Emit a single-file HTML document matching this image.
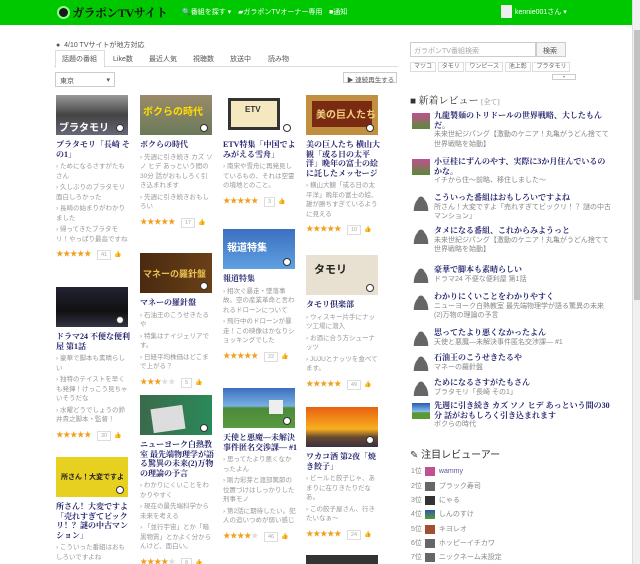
<!DOCTYPE html>
<html style="overflow:hidden;width:640px;height:564px"><head><meta charset="utf-8"><style>
*{margin:0;padding:0;box-sizing:border-box}
body{width:640px;height:564px;overflow:hidden;background:#fff;font-family:"Liberation Sans","Noto Sans CJK JP",sans-serif;position:relative;color:#888}
.hdr{position:absolute;left:0;top:0;width:632px;height:25px;background:#00c800;color:#fff}
.sb{position:absolute;left:632px;top:0;width:8px;height:564px;background:#f0f0f0;border-left:1px solid #ddd}
.sb i{position:absolute;left:1px;top:30px;width:6px;height:270px;background:#c2c2c2}
.a{position:absolute}
.card{position:absolute;width:74px}
.th{width:72px;height:40px;position:relative;overflow:hidden}
.th:after{content:"";position:absolute;right:4px;bottom:3px;width:6px;height:6px;border-radius:50%;background:#fff;border:1.5px solid #333}
.t{font-family:"Liberation Serif","Noto Serif CJK SC",serif;font-weight:bold;color:#23236e;font-size:8px;line-height:9.5px;margin-top:5px}
.c{font-size:6.5px;line-height:9.5px;color:#999;margin-top:3px}
.c p{margin-bottom:2px}
.s{margin-top:4px;font-size:7.5px;color:#f0a020;letter-spacing:-.5px;white-space:nowrap}
.s b{display:inline-block;font-weight:normal;color:#aaa;border:1px solid #ddd;font-size:5.5px;padding:0 3px;margin-left:6px;line-height:8px;letter-spacing:0}
.s u{text-decoration:none;color:#bbb;font-size:6px;margin-left:3px}
.rv{position:absolute;left:412px;width:200px}
.rv .ic{position:absolute;left:0;top:2px;width:18px;height:16px}
.rv .tt{margin-left:22px;font-family:"Liberation Serif","Noto Serif CJK SC",serif;font-weight:bold;color:#23236e;font-size:8px;line-height:9.5px}
.rv .sub{margin-left:22px;font-size:7px;color:#888;line-height:9.5px}
.usr{background:radial-gradient(circle at 50% 30%,#666 3px,transparent 3.5px),radial-gradient(ellipse at 50% 100%,#666 7px,transparent 7.5px)}
.rk{position:absolute;left:411px;font-size:7px;color:#888}
.rk i{display:inline-block;width:10px;height:9px;vertical-align:middle;margin:0 4px 0 3px}
.tab{position:absolute;top:54px;font-size:7px;color:#555;white-space:nowrap}
</style></head><body>
<div class="hdr">
 <div class="a" style="left:57px;top:6px;width:13px;height:13px;border-radius:50%;background:#1a1a1a;border:2px solid #8f8"></div>
 <div class="a" style="left:72px;top:4px;font-size:12px;font-weight:bold;color:#111;letter-spacing:-.5px;font-family:'Liberation Serif','Noto Serif CJK JP',serif">ガラポンTVサイト</div>
 <div class="a" style="left:182px;top:7px;font-size:7px">🔍番組を探す ▾</div>
 <div class="a" style="left:238px;top:7px;font-size:7px">▰ガラポンTVオーナー専用</div>
 <div class="a" style="left:329px;top:7px;font-size:7px">■通知</div>
 <div class="a" style="left:501px;top:5px;width:11px;height:13px;background:#eee"></div>
 <div class="a" style="left:515px;top:7px;font-size:7px">kennie001さん ▾</div>
</div>
<div class="sb"><i></i></div>

<div class="a" style="left:56px;top:40px;font-size:7px;color:#555">● &nbsp;4/10 TVサイトが地方対応</div>
<div class="a" style="left:54px;top:50px;width:344px;height:17px;border-bottom:1px solid #ddd"></div>
<div class="a" style="left:55px;top:50px;width:50px;height:18px;border:1px solid #ddd;border-bottom-color:#fff;background:#fff"></div>
<div class="tab" style="left:62px">話題の番組</div>
<div class="tab" style="left:113px">Like数</div>
<div class="tab" style="left:149px">最近人気</div>
<div class="tab" style="left:193px">視聴数</div>
<div class="tab" style="left:230px">放送中</div>
<div class="tab" style="left:268px">読み物</div>
<div class="a" style="left:55px;top:72px;width:60px;height:15px;border:1px solid #ccc;font-size:7px;color:#555;padding:3px 4px">東京<span style="float:right">▾</span></div>
<div class="a" style="left:343px;top:72px;width:54px;height:11px;border:1px solid #ccc;font-size:6.5px;color:#555;padding:1px 3px;white-space:nowrap">▶ 連続再生する</div>

<!-- col1 -->
<div class="card" style="left:56px;top:95px"><div class="th" style="background:linear-gradient(#999,#444 50%,#667)"><span style="position:absolute;left:3px;top:24px;color:#fff;font-size:10px;font-weight:bold">ブラタモリ</span></div>
<div class="t">ブラタモリ「長崎 その1」</div>
<div class="c"><p>› ためになるさすがたもさん</p><p>› 久しぶりのブラタモリ面白しろかった</p><p>› 長崎の始まりがわかりました</p><p>› 帰ってきたブラタモリ！やっぱり最高ですね</p></div>
<div class="s">★★★★★<b>41</b><u>👍</u></div></div>
<div class="card" style="left:56px;top:287px"><div class="th" style="background:linear-gradient(#223,#111 60%,#334)"></div>
<div class="t">ドラマ24 不便な便利屋 第1話</div>
<div class="c"><p>› 豪華で脚本も素晴らしい</p><p>› 独特のテイストを早くも発揮！けっこう見ちゃいそうだな</p><p>› 水曜どうでしょうの鈴井貴之脚本・監督！</p></div>
<div class="s">★★★★★<b>30</b><u>👍</u></div></div>
<div class="card" style="left:56px;top:457px"><div class="th" style="background:#e8d020"><span style="position:absolute;left:5px;top:15px;color:#222;font-size:7px;font-weight:bold">所さん！大変ですよ</span></div>
<div class="t">所さん！大変ですよ「売れすぎてビックリ！？謎の中古マンション」</div>
<div class="c"><p>› こういった番組はおもしろいですよね</p><p>› 夏はゴルフ冬はスキー</p></div></div>

<!-- col2 -->
<div class="card" style="left:140px;top:95px"><div class="th" style="background:linear-gradient(#9a8a6a,#6a7a5a)"><span style="position:absolute;left:3px;top:8px;color:#fd0;font-size:10px;font-weight:bold">ボクらの時代</span></div>
<div class="t">ボクらの時代</div>
<div class="c"><p>› 先週に引き続き カズ ソノ ヒデ あっという間の30分 話がおもしろく引き込まれます</p><p>› 先週に引き続きおもしろい</p></div>
<div class="s">★★★★★<b>17</b><u>👍</u></div></div>
<div class="card" style="left:140px;top:253px"><div class="th" style="background:linear-gradient(90deg,#4a2a10,#6a4018)"><span style="position:absolute;left:3px;top:14px;color:#e8c050;font-size:9px;font-weight:bold">マネーの羅針盤</span></div>
<div class="t">マネーの羅針盤</div>
<div class="c"><p>› 石油王のこうせきたるや</p><p>› 特集はナイジェリアです。</p><p>› 日経平均株価はどこまで上がる？</p></div>
<div class="s">★★★<span style="color:#ddd">★★</span><b>5</b><u>👍</u></div></div>
<div class="card" style="left:140px;top:395px"><div class="th" style="background:linear-gradient(90deg,#3a6a4a,#2a8a5a)"><div style="position:absolute;left:12px;top:12px;width:32px;height:24px;background:#ddd;transform:rotate(-8deg)"></div></div>
<div class="t">ニューヨーク白熱教室 最先端物理学が語る驚異の未来(2)万物の理論の予言</div>
<div class="c"><p>› わかりにくいことをわかりやすく</p><p>› 現在の最先端科学から未来を考える</p><p>› 「並行宇宙」とか「暗黒物質」とかよく分からんけど、面白い。</p></div>
<div class="s">★★★★<span style="color:#ddd">★</span><b>8</b><u>👍</u></div></div>

<!-- col3 -->
<div class="card" style="left:223px;top:95px"><div class="th" style="background:#fff"><div style="position:absolute;left:5px;top:3px;width:52px;height:32px;background:#f5e8c0;border:3px solid #333"></div><span style="position:absolute;left:22px;top:10px;color:#333;font-size:8px;font-weight:bold">ETV</span></div>
<div class="t">ETV特集「中国でよみがえる雪舟」</div>
<div class="c"><p>› 南宋や雪舟に再発見しているもの、それは空霊の境地とのこと。</p></div>
<div class="s">★★★★★<b>3</b><u>👍</u></div></div>
<div class="card" style="left:223px;top:229px"><div class="th" style="background:linear-gradient(#3a70c0,#60a0e0)"><span style="position:absolute;left:4px;top:10px;color:#fff;font-size:10px;font-weight:bold">報道特集</span></div>
<div class="t">報道特集</div>
<div class="c"><p>› 相次ぐ暴走・墜落事故。空の産業革命と言われるドローンについて</p><p>› 飛行中のドローンが暴走！この映像はかなりショッキングでした</p></div>
<div class="s">★★★★★<b>22</b><u>👍</u></div></div>
<div class="card" style="left:223px;top:388px"><div class="th" style="background:linear-gradient(#3a70c0 0,#7ab0e0 45%,#4a8a3a 50%,#5a9a40)"><div style="position:absolute;left:46px;top:12px;width:14px;height:14px;background:#eee"></div></div>
<div class="t">天使と悪魔—未解決事件匿名交渉課— #1</div>
<div class="c"><p>› 思ってたより悪くなかったよん</p><p>› 剛力彩芽と渡部篤郎の位置づけはしっかりした刑事モノ</p><p>› 第2話に期待したい。犯人の追いつめが弱い感じ</p></div>
<div class="s">★★★★<span style="color:#ddd">★</span><b>46</b><u>👍</u></div></div>

<!-- col4 -->
<div class="card" style="left:306px;top:95px"><div class="th" style="background:#c09040"><div style="position:absolute;left:6px;top:6px;width:60px;height:26px;background:#7a2a10"></div><span style="position:absolute;left:10px;top:11px;color:#f0d080;font-size:10px;font-weight:bold">美の巨人たち</span></div>
<div class="t">美の巨人たち 横山大観「或る日の太平洋」晩年の富士の絵に託したメッセージ</div>
<div class="c"><p>› 横山大観「或る日の太平洋」晩年の富士の絵、雄が勝ちすぎているように見える</p></div>
<div class="s">★★★★★<b>10</b><u>👍</u></div></div>
<div class="card" style="left:306px;top:255px"><div class="th" style="background:#e8e0d0"><span style="position:absolute;left:8px;top:6px;color:#222;font-size:11px;font-weight:bold">タモリ</span></div>
<div class="t">タモリ倶楽部</div>
<div class="c"><p>› ウィスキー片手にナッツ工場に潜入</p><p>› お酒に合う方シューナッツ</p><p>› JUJUとナッツを食べてます。</p></div>
<div class="s">★★★★★<b>49</b><u>👍</u></div></div>
<div class="card" style="left:306px;top:407px"><div class="th" style="background:linear-gradient(#e86010,#f8b020 55%,#6a4a30 75%,#3a3040)"></div>
<div class="t">ワカコ酒 第2夜「焼き餃子」</div>
<div class="c"><p>› ビールと餃子じゃ、あまりに在りきたりだなあ。</p><p>› この餃子屋さん、行きたいなぁ〜</p></div>
<div class="s">★★★★★<b>24</b><u>👍</u></div></div>
<div class="card" style="left:306px;top:555px"><div class="th" style="background:#333"></div></div>

<!-- sidebar -->
<div class="a" style="left:410px;top:42px;width:126px;height:15px;border:1px solid #ccc;font-size:7px;color:#aaa;padding:3px">ガラポンTV番組検索</div>
<div class="a" style="left:536px;top:42px;width:30px;height:15px;border:1px solid #ccc;background:#f4f4f4;font-size:7px;color:#555;padding:3px 6px">検索</div>
<div class="a" style="left:410px;top:61px;font-size:6px;color:#666;white-space:nowrap">
<span style="border:1px solid #ddd;padding:1px 3px">マツコ</span> <span style="border:1px solid #ddd;padding:1px 3px">タモリ</span> <span style="border:1px solid #ddd;padding:1px 3px">ワンピース</span> <span style="border:1px solid #ddd;padding:1px 3px">池上彰</span> <span style="border:1px solid #ddd;padding:1px 3px">ブラタモリ</span></div>
<div class="a" style="left:552px;top:74px;width:24px;height:6px;border:1px solid #ccc;font-size:4px;text-align:center;line-height:4px">▾</div>
<div class="a" style="left:410px;top:92px;font-size:10px;color:#333;font-family:'Liberation Serif','Noto Serif CJK JP',serif">■ 新着レビュー <span style="font-size:7px;color:#888">[全て]</span></div>

<div class="rv" style="top:111px"><div class="ic" style="background:linear-gradient(#c05090,#5a8a3a)"></div><div class="tt">九龍製麺のトリドールの世界戦略、大したもんだ。</div><div class="sub">未来世紀ジパング【激動のケニア！丸亀がうどん捨てて世界戦略を始動】</div></div>
<div class="rv" style="top:157px"><div class="ic" style="background:linear-gradient(#c05090,#5a8a3a)"></div><div class="tt">小豆桂にずんのやす、実際に3か月住んでいるのかな。</div><div class="sub">イチから住〜前略、移住しました〜</div></div>
<div class="rv" style="top:193px"><div class="ic usr"></div><div class="tt">こういった番組はおもしろいですよね</div><div class="sub">所さん！大変ですよ「売れすぎてビックリ！？ 謎の中古マンション」</div></div>
<div class="rv" style="top:226px"><div class="ic usr"></div><div class="tt">タメになる番組、これからみようっと</div><div class="sub">未来世紀ジパング【激動のケニア！丸亀がうどん捨てて世界戦略を始動】</div></div>
<div class="rv" style="top:265px"><div class="ic usr"></div><div class="tt">豪華で脚本も素晴らしい</div><div class="sub">ドラマ24 不便な便利屋 第1話</div></div>
<div class="rv" style="top:292px"><div class="ic usr"></div><div class="tt">わかりにくいことをわかりやすく</div><div class="sub">ニューヨーク白熱教室 最先端物理学が語る驚異の未来(2)万物の理論の予言</div></div>
<div class="rv" style="top:328px"><div class="ic usr"></div><div class="tt">思ってたより悪くなかったよん</div><div class="sub">天使と悪魔—未解決事件匿名交渉課— #1</div></div>
<div class="rv" style="top:353px"><div class="ic usr"></div><div class="tt">石油王のこうせきたるや</div><div class="sub">マネーの羅針盤</div></div>
<div class="rv" style="top:378px"><div class="ic usr"></div><div class="tt">ためになるさすがたもさん</div><div class="sub">ブラタモリ「長崎 その1」</div></div>
<div class="rv" style="top:401px"><div class="ic" style="background:linear-gradient(#2a5ab0,#8ac0f0 55%,#5a9a30 60%)"></div><div class="tt">先週に引き続き カズ ソノ ヒデ あっという間の30分 話がおもしろく引き込まれます</div><div class="sub">ボクらの時代</div></div>

<div class="a" style="left:410px;top:446px;font-size:10px;color:#333">✎ 注目レビューアー</div>
<div class="rk" style="top:466px">1位<i style="background:#c05090"></i><span style="color:#5a5a9a">wammy</span></div>
<div class="rk" style="top:481px">2位<i class="usr"></i>ブラック寿司</div>
<div class="rk" style="top:495px">3位<i style="background:#333"></i>にゃる</div>
<div class="rk" style="top:509px">4位<i style="background:linear-gradient(#2a5ab0,#5a9a30)"></i>しんのすけ</div>
<div class="rk" style="top:524px">5位<i style="background:#a05030"></i>キヨレオ</div>
<div class="rk" style="top:538px">6位<i class="usr"></i>ホッピーイチカワ</div>
<div class="rk" style="top:552px">7位<i class="usr"></i>ニックネーム未設定</div>
</body></html>
